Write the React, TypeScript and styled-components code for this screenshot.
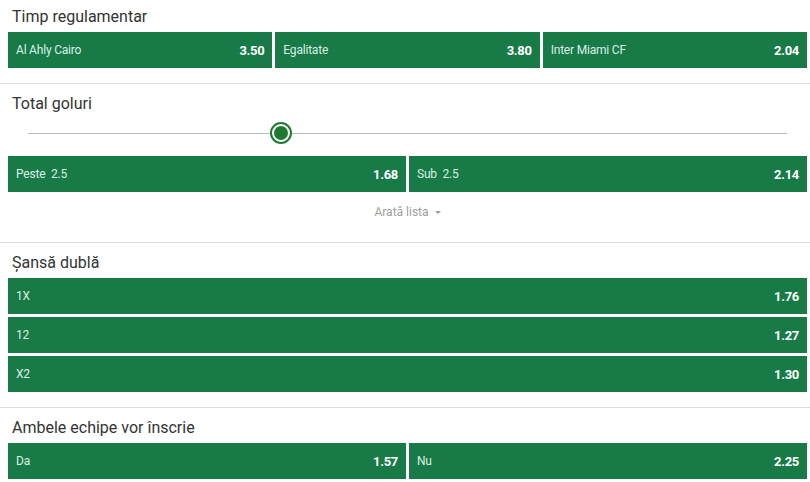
import React from "react";
import styled, { createGlobalStyle } from "styled-components";

const Global = createGlobalStyle`
  html, body { margin: 0; padding: 0; background: #fff; }
  body { font-family: Roboto, "Liberation Sans", Arial, sans-serif; }
  * { box-sizing: border-box; }
`;

const Page = styled.div`
  width: 810px;
  display: flex;
  flex-direction: column;
`;

const Section = styled.section<{ $first?: boolean }>`
  padding: ${(p) => (p.$first ? "7px" : "10px")} 3px 15px 8px;
  border-top: ${(p) => (p.$first ? "none" : "1px solid #dedede")};
`;

const Title = styled.div`
  font-size: 16px;
  line-height: 20px;
  color: #333;
  padding-left: 4px;
  margin-bottom: 5px;
`;

const Grid = styled.div<{ $cols: number }>`
  display: grid;
  grid-template-columns: repeat(${(p) => p.$cols}, 1fr);
  gap: 3px;
`;

const Odd = styled.button`
  height: 36px;
  border: none;
  margin: 0;
  background: #177a47;
  display: flex;
  align-items: center;
  justify-content: space-between;
  padding: 0 8px;
  font-family: Roboto, "Liberation Sans", Arial, sans-serif;
  cursor: pointer;
`;

const Label = styled.span`
  font-size: 12px;
  color: #dcefe3;
  letter-spacing: -0.2px;
  white-space: pre;
`;

const Price = styled.span`
  font-size: 13px;
  font-weight: 700;
  color: #fff;
  letter-spacing: -0.3px;
`;

const SliderWrap = styled.div`
  height: 38px;
  margin: -5px 0 4px;
  padding: 0 20px;
  display: flex;
  align-items: center;
`;

const Track = styled.div`
  position: relative;
  flex: 1;
  height: 1px;
  background: #bdbdbd;
`;

const Thumb = styled.div`
  position: absolute;
  top: 50%;
  width: 22px;
  height: 22px;
  margin-left: -11px;
  margin-top: -11px;
  border-radius: 50%;
  border: 2px solid #1f7a2f;
  background: #fff;
  display: flex;
  align-items: center;
  justify-content: center;
  &::after {
    content: "";
    width: 14px;
    height: 14px;
    border-radius: 50%;
    background: #1f7a2f;
  }
`;

const ShowMore = styled.div`
  margin-top: 12px;
  margin-bottom: 7px;
  display: flex;
  align-items: center;
  justify-content: center;
  gap: 4px;
  font-size: 12px;
  line-height: 16px;
  color: #9e9e9e;
`;

const Caret = styled.span`
  width: 0;
  height: 0;
  border-left: 3px solid transparent;
  border-right: 3px solid transparent;
  border-top: 3px solid #9e9e9e;
  margin-left: 2px;
`;

type O = { label: string; price: string };

const OddsGrid: React.FC<{ items: O[]; cols: number }> = ({ items, cols }) => (
  <Grid $cols={cols}>
    {items.map((o) => (
      <Odd key={o.label}>
        <Label>{o.label}</Label>
        <Price>{o.price}</Price>
      </Odd>
    ))}
  </Grid>
);

export default function App() {
  return (
    <Page>
      <Global />
      <Section $first>
        <Title>Timp regulamentar</Title>
        <OddsGrid
          cols={3}
          items={[
            { label: "Al Ahly Cairo", price: "3.50" },
            { label: "Egalitate", price: "3.80" },
            { label: "Inter Miami CF", price: "2.04" },
          ]}
        />
      </Section>
      <Section>
        <Title>Total goluri</Title>
        <SliderWrap>
          <Track>
            <Thumb style={{ left: `${((281 - 28) / (787 - 28)) * 100}%` }} />
          </Track>
        </SliderWrap>
        <OddsGrid
          cols={2}
          items={[
            { label: "Peste  2.5", price: "1.68" },
            { label: "Sub  2.5", price: "2.14" },
          ]}
        />
        <ShowMore>
          Arată lista <Caret />
        </ShowMore>
      </Section>
      <Section>
        <Title>Șansă dublă</Title>
        <OddsGrid
          cols={1}
          items={[
            { label: "1X", price: "1.76" },
            { label: "12", price: "1.27" },
            { label: "X2", price: "1.30" },
          ]}
        />
      </Section>
      <Section>
        <Title>Ambele echipe vor înscrie</Title>
        <OddsGrid
          cols={2}
          items={[
            { label: "Da", price: "1.57" },
            { label: "Nu", price: "2.25" },
          ]}
        />
      </Section>
    </Page>
  );
}
